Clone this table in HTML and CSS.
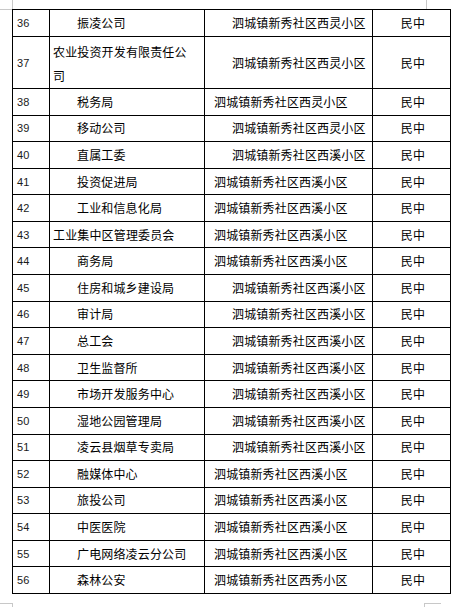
FILE: index.html
```html
<!DOCTYPE html>
<html lang="zh-CN">
<head>
<meta charset="utf-8">
<title>名单</title>
<link rel="stylesheet" href="styles.css">
</head>
<body>
<div class="page">
  <span class="mark mark-tl-h"></span>
  <span class="mark mark-tl-v"></span>
  <span class="mark mark-tr-v"></span>
  <span class="mark mark-bl-h"></span>
  <span class="mark mark-bl-v"></span>
  <span class="mark mark-br-h"></span>
  <span class="mark mark-br-v"></span>
  <table class="list">
    <colgroup>
      <col class="c-no">
      <col class="c-unit">
      <col class="c-addr">
      <col class="c-town">
    </colgroup>
    <tbody>
      <tr class="row-a"><td class="no">36</td><td class="unit ind">振凌公司</td><td class="addr ind">泗城镇新秀社区西灵小区</td><td class="town">民中</td></tr>
      <tr class="row-tall"><td class="no">37</td><td class="unit two">农业投资开发有限责任公<br>司</td><td class="addr ind">泗城镇新秀社区西灵小区</td><td class="town">民中</td></tr>
      <tr><td class="no">38</td><td class="unit ind">税务局</td><td class="addr">泗城镇新秀社区西灵小区</td><td class="town">民中</td></tr>
      <tr><td class="no">39</td><td class="unit ind">移动公司</td><td class="addr ind">泗城镇新秀社区西灵小区</td><td class="town">民中</td></tr>
      <tr><td class="no">40</td><td class="unit ind">直属工委</td><td class="addr ind">泗城镇新秀社区西溪小区</td><td class="town">民中</td></tr>
      <tr><td class="no">41</td><td class="unit ind">投资促进局</td><td class="addr">泗城镇新秀社区西溪小区</td><td class="town">民中</td></tr>
      <tr><td class="no">42</td><td class="unit ind">工业和信息化局</td><td class="addr">泗城镇新秀社区西溪小区</td><td class="town">民中</td></tr>
      <tr><td class="no">43</td><td class="unit">工业集中区管理委员会</td><td class="addr">泗城镇新秀社区西溪小区</td><td class="town">民中</td></tr>
      <tr><td class="no">44</td><td class="unit ind">商务局</td><td class="addr">泗城镇新秀社区西溪小区</td><td class="town">民中</td></tr>
      <tr><td class="no">45</td><td class="unit ind">住房和城乡建设局</td><td class="addr ind">泗城镇新秀社区西溪小区</td><td class="town">民中</td></tr>
      <tr><td class="no">46</td><td class="unit ind">审计局</td><td class="addr ind">泗城镇新秀社区西溪小区</td><td class="town">民中</td></tr>
      <tr><td class="no">47</td><td class="unit ind">总工会</td><td class="addr ind">泗城镇新秀社区西溪小区</td><td class="town">民中</td></tr>
      <tr><td class="no">48</td><td class="unit ind">卫生监督所</td><td class="addr ind">泗城镇新秀社区西溪小区</td><td class="town">民中</td></tr>
      <tr><td class="no">49</td><td class="unit ind">市场开发服务中心</td><td class="addr ind">泗城镇新秀社区西溪小区</td><td class="town">民中</td></tr>
      <tr><td class="no">50</td><td class="unit ind">湿地公园管理局</td><td class="addr ind">泗城镇新秀社区西溪小区</td><td class="town">民中</td></tr>
      <tr><td class="no">51</td><td class="unit ind">凌云县烟草专卖局</td><td class="addr ind">泗城镇新秀社区西溪小区</td><td class="town">民中</td></tr>
      <tr><td class="no">52</td><td class="unit ind">融媒体中心</td><td class="addr">泗城镇新秀社区西溪小区</td><td class="town">民中</td></tr>
      <tr><td class="no">53</td><td class="unit ind">旅投公司</td><td class="addr">泗城镇新秀社区西溪小区</td><td class="town">民中</td></tr>
      <tr><td class="no">54</td><td class="unit ind">中医医院</td><td class="addr">泗城镇新秀社区西溪小区</td><td class="town">民中</td></tr>
      <tr><td class="no">55</td><td class="unit ind">广电网络凌云分公司</td><td class="addr">泗城镇新秀社区西溪小区</td><td class="town">民中</td></tr>
      <tr><td class="no">56</td><td class="unit ind">森林公安</td><td class="addr">泗城镇新秀社区西秀小区</td><td class="town">民中</td></tr>
    </tbody>
  </table>
</div>
</body>
</html>
```

FILE: styles.css
```css
html, body {
  margin: 0;
  padding: 0;
  background: #ffffff;
}

.page {
  position: relative;
  width: 458px;
  height: 607px;
  padding: 9px 0 0 12px;
  box-sizing: border-box;
  overflow: hidden;
}

.mark {
  position: absolute;
  background: #c8c8c8;
  display: block;
}
.mark-tl-h { left: 0; top: 9px; width: 12px; height: 1px; }
.mark-tl-v { left: 12px; top: 0; width: 1px; height: 9px; }
.mark-tr-v { left: 426px; top: 0; width: 1px; height: 9px; }
.mark-bl-h { left: 0; top: 603px; width: 12px; height: 1px; }
.mark-bl-v { left: 12px; top: 603px; width: 1px; height: 4px; }
.mark-br-h { left: 424px; top: 603px; width: 17px; height: 1px; }
.mark-br-v { left: 424px; top: 603px; width: 1px; height: 4px; }

.list {
  border-collapse: collapse;
  table-layout: fixed;
  width: 438px;
  font-family: "Noto Sans CJK SC", "Noto Sans", sans-serif;
  font-size: 12px;
  color: #000;
}

.c-no { width: 37px; }
.c-unit { width: 155px; }
.c-addr { width: 168px; }
.c-town { width: 78px; }

.list tr { height: 26.58px; }
.list tr.row-a { height: 27px; }
.list tr.row-tall { height: 52px; }

.list td {
  border: 1px solid #000;
  padding: 0;
  vertical-align: middle;
  white-space: nowrap;
  line-height: 16px;
  letter-spacing: 0.15px;
}

.no {
  font-family: "Liberation Sans", Arial, sans-serif;
  font-size: 11px;
  padding-left: 4px !important;
  color: #1a1a1a;
}

.unit { padding-left: 3px !important; }
.unit.ind { padding-left: 27px !important; }
.unit.two { line-height: 24px !important; padding-top: 3px !important; }

.addr { padding-left: 9px !important; }
.addr.ind { padding-left: 27px !important; }

.town { text-align: center; padding-left: 3px !important; }
```
